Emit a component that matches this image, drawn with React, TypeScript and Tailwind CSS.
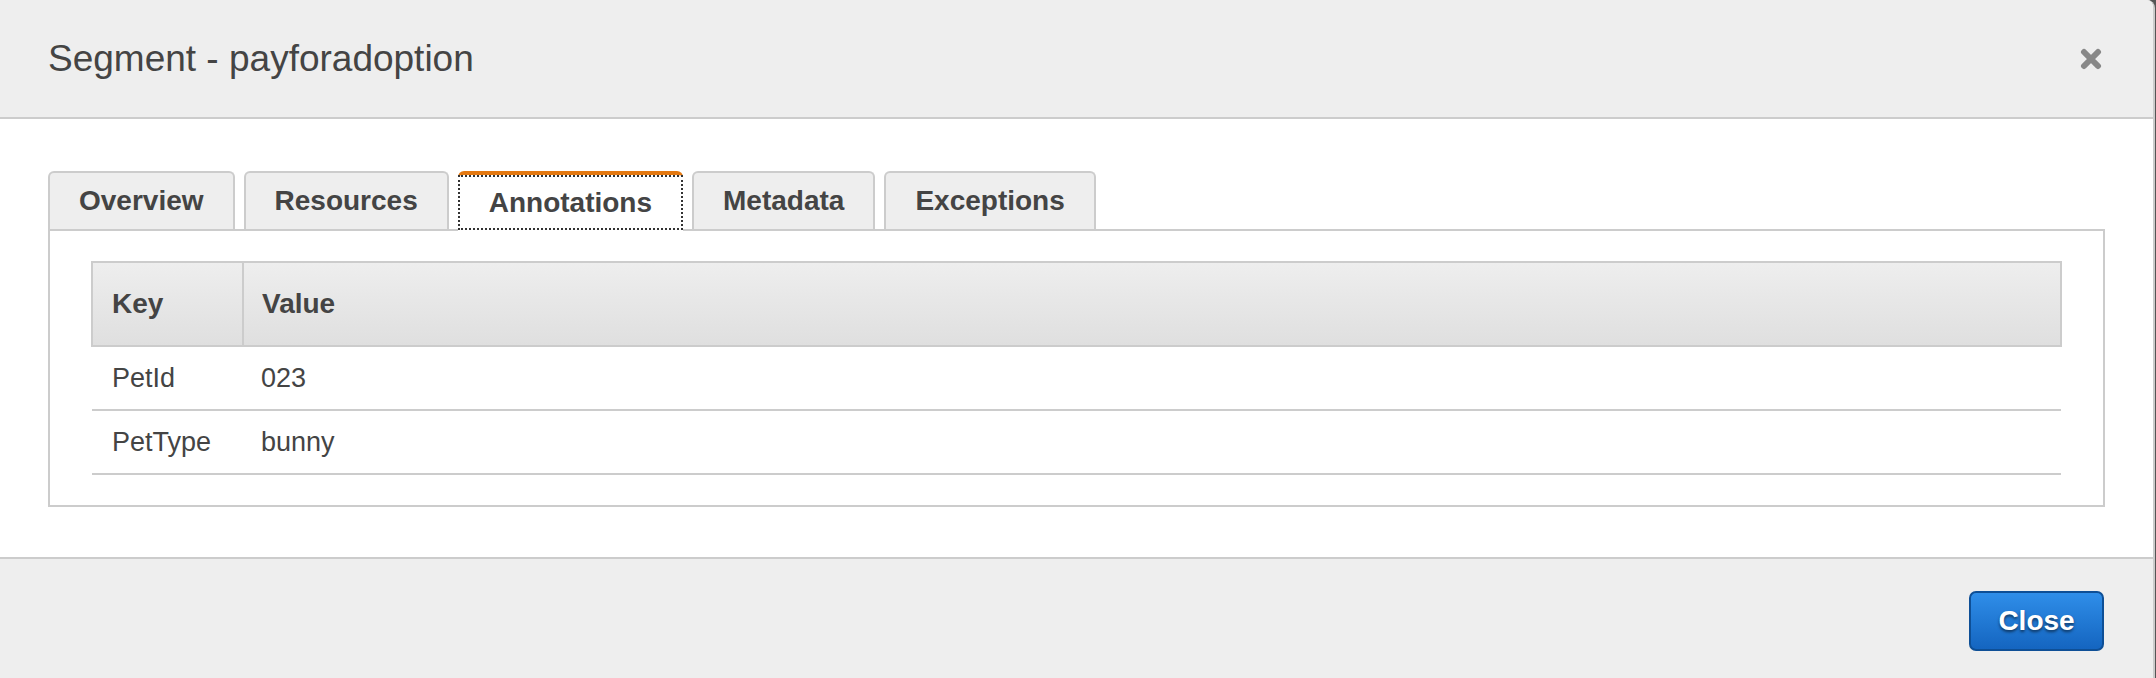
import React from 'react'

type Row = { key: string; value: string }

const tabs = ['Overview', 'Resources', 'Annotations', 'Metadata', 'Exceptions']
const activeTab = 'Annotations'

const rows: Row[] = [
  { key: 'PetId', value: '023' },
  { key: 'PetType', value: 'bunny' },
]

function CloseIcon() {
  return (
    <svg width="22" height="22" viewBox="0 0 22 22" aria-hidden="true">
      <path d="M4 4 L18 18 M18 4 L4 18" stroke="#888888" strokeWidth="6" strokeLinecap="round" />
    </svg>
  )
}

function Tab({ label, active }: { label: string; active: boolean }) {
  if (active) {
    return (
      <div className="relative z-10 -mb-[2px] flex h-[60px] items-center rounded-t-[6px] border-t-4 border-[#e47911] bg-white px-[31px]">
        <span className="pointer-events-none absolute inset-x-0 top-0 bottom-[1px] border-2 border-dotted border-[#333333]" />
        <span className="text-[28px] font-bold leading-none text-[#444444]">{label}</span>
      </div>
    )
  }
  return (
    <div className="flex h-[58px] items-center rounded-t-[6px] border-2 border-b-0 border-[#cccccc] bg-[#eeeeee] px-[29px]">
      <span className="text-[28px] font-bold leading-none text-[#444444]">{label}</span>
    </div>
  )
}

export default function App() {
  return (
    <div className="h-[678px] w-[2156px] overflow-hidden bg-[#555555] font-['Liberation_Sans',Arial,sans-serif]">
      <div className="flex h-full w-[2155px] flex-col overflow-hidden rounded-tr-[8px] border-r-2 border-[#cccccc] bg-white">
        <header className="flex h-[119px] shrink-0 items-center justify-between border-b-2 border-[#cccccc] bg-[#eeeeee] pl-[48px] pr-[51px]">
          <h1 className="text-[37px] font-normal leading-none text-[#444444]">Segment - payforadoption</h1>
          <CloseIcon />
        </header>

        <main className="px-[48px] pt-[52px] pb-[50px]">
          <div className="flex items-end gap-[9px]">
            {tabs.map((t) => (
              <Tab key={t} label={t} active={t === activeTab} />
            ))}
          </div>
          <div className="border-2 border-[#cccccc] px-[41px] py-[30px]">
            <table className="w-full border-collapse text-[27px] text-[#444444]">
              <thead>
                <tr className="h-[84px] bg-linear-to-b from-[#eeeeee] to-[#dfdfdf]">
                  <th className="w-[151px] border-2 border-[#cccccc] pl-[19px] text-left text-[28px] font-bold">Key</th>
                  <th className="border-2 border-[#cccccc] pl-[18px] text-left text-[28px] font-bold">Value</th>
                </tr>
              </thead>
              <tbody>
                {rows.map((r) => (
                  <tr key={r.key} className="h-[64px] border-b-2 border-[#cccccc]">
                    <td className="pl-[20px]">{r.key}</td>
                    <td className="pl-[18px]">{r.value}</td>
                  </tr>
                ))}
              </tbody>
            </table>
          </div>
        </main>

        <footer className="flex flex-1 items-start justify-end border-t-2 border-[#cccccc] bg-[#eeeeee] pt-[32px] pr-[49px]">
          <button className="flex h-[60px] w-[135px] items-center justify-center rounded-[7px] border-2 border-[#0e4f96] bg-linear-to-b from-[#2f8ee9] to-[#1465c0] text-[28px] font-bold text-white [text-shadow:0_2px_3px_rgba(0,0,0,0.55)]">
            Close
          </button>
        </footer>
      </div>
    </div>
  )
}
